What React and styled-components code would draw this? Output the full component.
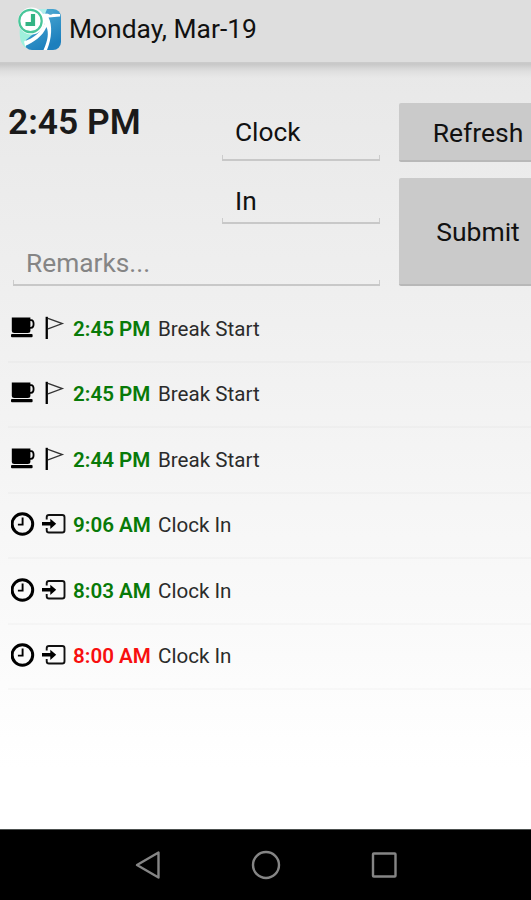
import React from 'react';
import styled, { createGlobalStyle } from 'styled-components';

const entries = [
  { id: 1, type: 'break', time: '2:45 PM', label: 'Break Start' },
  { id: 2, type: 'break', time: '2:45 PM', label: 'Break Start' },
  { id: 3, type: 'break', time: '2:44 PM', label: 'Break Start' },
  { id: 4, type: 'clock', time: '9:06 AM', label: 'Clock In' },
  { id: 5, type: 'clock', time: '8:03 AM', label: 'Clock In' },
  { id: 6, type: 'clock', time: '8:00 AM', label: 'Clock In', late: true },
];

const Logo = () => (
  <svg width="44" height="44" viewBox="0 0 44 44">
    <defs>
      <linearGradient id="tile" x1="0" y1="0" x2="0.5" y2="1">
        <stop offset="0" stopColor="#57b3d8" />
        <stop offset="1" stopColor="#1c7fbd" />
      </linearGradient>
    </defs>
    <rect x="6" y="2" width="37" height="41" rx="8" fill="url(#tile)" />
    <path d="M2 19C1 29 2 37 8 41L8 33L20 23Z" fill="#9ff0dc" />
    <path d="M16 2H29L27 7L22 6Z" fill="#b0eee9" />
    <path d="M22 6.5L42 7V9.5L30.5 10.5C34.5 18 34 31 29 43H25.5C30 33 31 26 28.5 20C24 30 16 35 7 39L6 34.5C16 31 23 25 26.5 17Z" fill="#fff" />
    <circle cx="32.5" cy="5" r="2.7" fill="#4aa3cd" />
    <circle cx="13.5" cy="14" r="13.4" fill="#fff" />
    <circle cx="12.5" cy="14" r="11.2" fill="#fff" stroke="#48c699" strokeWidth="2.2" />
    <path d="M15 7V17H7.5" fill="none" stroke="#32b483" strokeWidth="4.2" />
  </svg>
);

const CupIcon = () => (
  <svg width="24" height="24" viewBox="0 0 24 24">
    <path d="M0.8 1.6H19.4V14.5Q19.4 17 16.8 17H3.4Q0.8 17 0.8 14.5Z" />
    <path d="M18 4.2H20.2Q22.6 4.2 22.6 8Q22.6 11.8 20 11.8H18" fill="none" stroke="#000" strokeWidth="1.8" />
    <rect x="0" y="18" width="21.6" height="3.2" rx="1" />
  </svg>
);

const FlagIcon = () => (
  <svg width="24" height="24" viewBox="0 0 24 24">
    <rect x="3.6" y="0.8" width="2.3" height="22.2" />
    <path d="M6 2.4L20.3 7.6L6 12.8" fill="none" stroke="#333" strokeWidth="1.3" />
  </svg>
);

const ClockIcon = () => (
  <svg width="24" height="24" viewBox="0 0 24 24" fill="none" stroke="#000">
    <circle cx="11.4" cy="12" r="10.3" strokeWidth="3" />
    <path d="M11.6 5.6V12.6H6.9" strokeWidth="1.9" />
  </svg>
);

const EnterIcon = () => (
  <svg width="24" height="24" viewBox="0 0 24 24">
    <path d="M4.7 7.5V5.3Q4.7 3 7 3H20.2Q22.5 3 22.5 5.3V18.2Q22.5 20.5 20.2 20.5H7Q4.7 20.5 4.7 18.2V16" fill="none" stroke="#111" strokeWidth="1.9" />
    <path d="M0 10H8.3V6.7L14.2 11.8L8.3 16.9V13.5H0Z" />
  </svg>
);

const App = () => {
  return (
    <>
      <GlobalStyle />
      <Screen>
        <Header>
          <Logo />
          <Title>Monday, Mar-19</Title>
        </Header>
        <Content>
          <Form>
            <Inputs>
              <TopInputs>
                <CurrentTime>2:45 PM</CurrentTime>
                <Selects>
                  <Field $height={58}>Clock</Field>
                  <Field $height={45}>In</Field>
                </Selects>
              </TopInputs>
              <Remarks $height={45}>Remarks...</Remarks>
            </Inputs>
            <Buttons>
              <Button $height={59}>Refresh</Button>
              <Button $height={109}>Submit</Button>
            </Buttons>
          </Form>
          <EntryList>
            {entries.map(item => (
              <Entry key={item.id}>
                <EntryIcons>
                  {item.type === 'break' ? <CupIcon /> : <ClockIcon />}
                  {item.type === 'break' ? <FlagIcon /> : <EnterIcon />}
                </EntryIcons>
                <EntryTime $late={item.late}>{item.time}</EntryTime>
                <EntryLabel>{item.label}</EntryLabel>
              </Entry>
            ))}
          </EntryList>
        </Content>
        <NavBar>
          <svg width="28" height="30" viewBox="0 0 28 30">
            <path d="M24.5 2.5V27.5L3 15Z" />
          </svg>
          <svg width="30" height="30" viewBox="0 0 30 30">
            <circle cx="15" cy="15" r="13" />
          </svg>
          <svg width="28" height="30" viewBox="0 0 28 30">
            <rect x="3" y="3.5" width="22.5" height="23" rx="0.8" />
          </svg>
        </NavBar>
      </Screen>
    </>
  );
};

const GlobalStyle = createGlobalStyle`
  body {
    margin: 0;
    overflow: hidden;
    font-family: Roboto, "Liberation Sans", sans-serif;
  }
  * {
    box-sizing: border-box;
  }
`
const Screen = styled.div`
  display: flex;
  flex-direction: column;
  width: 531px;
  height: 900px;
  overflow: hidden;
`
const Header = styled.header`
  display: flex;
  align-items: center;
  flex: none;
  height: 62px;
  padding: 0 0 4px 18px;
  background: #dedede;
`
const Title = styled.h1`
  margin: 0 0 0 7px;
  font-size: 26.4px;
  font-weight: 400;
  line-height: 32px;
  color: #111;
  white-space: nowrap;
`
const Content = styled.main`
  flex: 1;
  padding-top: 41px;
  background:
    linear-gradient(#cccccc, #c8c8c8 2px, #d6d6d6 6px, #e0e0e0 10px, rgba(232, 232, 232, 0) 16px),
    linear-gradient(#e8e8e8, #efefef 30%, #f9f9f9 70%, #ffffff 92%);
`
const Form = styled.section`
  display: flex;
  gap: 19px;
  height: 183px;
`
const Inputs = styled.div`
  display: flex;
  flex-direction: column;
  flex: none;
  width: 380px;
  padding-left: 8px;
`
const TopInputs = styled.div`
  display: flex;
  justify-content: space-between;
  height: 138px;
`
const CurrentTime = styled.div`
  font-size: 35.4px;
  font-weight: 600;
  line-height: 38px;
  color: #1a1a1a;
  white-space: nowrap;
`
const Selects = styled.div`
  display: flex;
  flex-direction: column;
  gap: 18px;
  width: 158px;
`
const Field = styled.div`
  display: flex;
  align-items: center;
  height: ${props => props.$height}px;
  padding: 0 0 1px 13px;
  font-size: 26.3px;
  line-height: 30px;
  color: #111;
  /* the short ticks at both ends belong to the underline */
  background:
    linear-gradient(#c8c8c8, #c8c8c8) 0 100% / 100% 2px no-repeat,
    linear-gradient(#cccccc, #cccccc) 0 100% / 1px 6px no-repeat,
    linear-gradient(#cccccc, #cccccc) 100% 100% / 1px 6px no-repeat;
`
const Remarks = styled(Field)`
  margin-left: 5px;
  color: #858585;
`
const Buttons = styled.div`
  display: flex;
  flex-direction: column;
  gap: 16px;
  width: 158px;
  flex: none;
`
const Button = styled.button`
  height: ${props => props.$height}px;
  padding: 2px 0 0;
  border: 0;
  border-bottom: 2px solid #b8b8b8;
  border-radius: 2px;
  background: #cacaca;
  font-family: inherit;
  font-size: 26.5px;
  color: #111;
`
const EntryList = styled.ul`
  margin: 11px 0 0 8px;
  padding: 0;
  list-style: none;
`
const Entry = styled.li`
  display: flex;
  align-items: center;
  height: 65.5px;
  padding-left: 3px;
  border-bottom: 2px solid rgba(0, 0, 0, 0.02);
`
const EntryIcons = styled.span`
  display: flex;
  gap: 7px;
  padding-bottom: 2px;
`
const EntryTime = styled.span`
  margin-left: 7px;
  width: 85px;
  font-size: 20.6px;
  font-weight: 600;
  color: ${props => props.$late ? '#f80f0f' : '#087a08'};
  white-space: nowrap;
`
const EntryLabel = styled.span`
  font-size: 20.6px;
  color: #2b2b2b;
  white-space: nowrap;
`
const NavBar = styled.nav`
  display: flex;
  align-items: center;
  justify-content: center;
  gap: 89px;
  flex: none;
  height: 71px;
  border-top: 1px solid #4d5150;
  background: #000;

  svg {
    fill: none;
    stroke: #858585;
    stroke-width: 2.4;
    stroke-linejoin: round;
  }
`

export default App;
